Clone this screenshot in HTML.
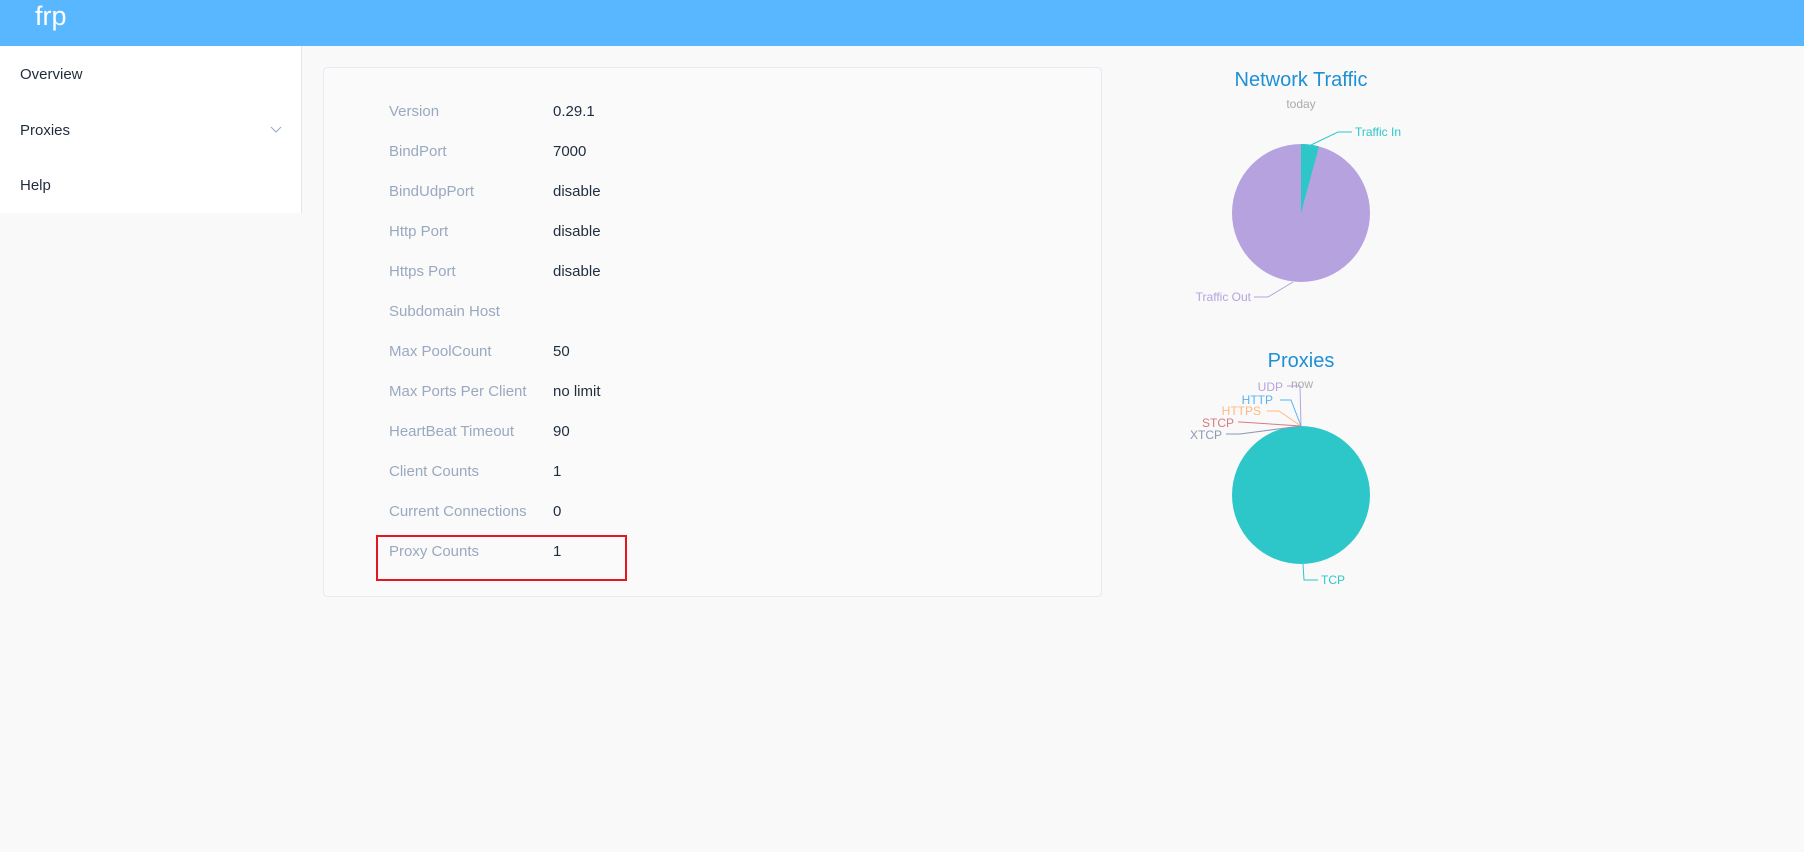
<!DOCTYPE html>
<html><head><meta charset="utf-8"><style>
body{margin:0;width:1804px;height:852px;background:#f9f9f9;font-family:"Liberation Sans",sans-serif;position:relative;overflow:hidden}
.hdr{position:absolute;left:0;top:0;width:1804px;height:46px;background:#58b7ff}
.hdr span{position:absolute;left:35px;top:1px;color:#fff;font-size:27px;line-height:30px}
.side{position:absolute;left:0;top:46px;width:301px;height:167px;background:#fff;border-right:1px solid #e6e6e6}
.side div{position:absolute;left:20px;font-size:15px;color:#1f2d3d}
.card{position:absolute;left:323px;top:67px;width:777px;height:528px;border:1px solid #e6ebf5;border-radius:4px;background:#fafafa}
.r{position:absolute;font-size:15px}
.l{left:389px;color:#99a9bf}.v{left:553px;color:#1f2d3d}
.box{position:absolute;left:376px;top:535px;width:247px;height:42px;border:2px solid #e5161f}
</style></head><body>
<div class="hdr"><span>frp</span></div>
<div class="side"><div style="top:20px">Overview</div><div style="top:76px">Proxies</div><div style="top:131px">Help</div>
<svg style="position:absolute;left:270px;top:80px" width="12" height="8"><path d="M1 1L6 6L11 1" stroke="#99a9bf" fill="none"/></svg></div>
<div class="card"></div>
<div class="r l" style="top:103px">Version</div><div class="r v" style="top:103px">0.29.1</div>
<div class="r l" style="top:143px">BindPort</div><div class="r v" style="top:143px">7000</div>
<div class="r l" style="top:183px">BindUdpPort</div><div class="r v" style="top:183px">disable</div>
<div class="r l" style="top:223px">Http Port</div><div class="r v" style="top:223px">disable</div>
<div class="r l" style="top:263px">Https Port</div><div class="r v" style="top:263px">disable</div>
<div class="r l" style="top:303px">Subdomain Host</div>
<div class="r l" style="top:343px">Max PoolCount</div><div class="r v" style="top:343px">50</div>
<div class="r l" style="top:383px">Max Ports Per Client</div><div class="r v" style="top:383px">no limit</div>
<div class="r l" style="top:423px">HeartBeat Timeout</div><div class="r v" style="top:423px">90</div>
<div class="r l" style="top:463px">Client Counts</div><div class="r v" style="top:463px">1</div>
<div class="r l" style="top:503px">Current Connections</div><div class="r v" style="top:503px">0</div>
<div class="r l" style="top:543px">Proxy Counts</div><div class="r v" style="top:543px">1</div>
<div class="box"></div>
<svg style="position:absolute;left:0;top:0" width="1804" height="852" font-family="Liberation Sans, sans-serif">
<text x="1301" y="86" text-anchor="middle" font-size="20" fill="#1e90d6">Network Traffic</text>
<text x="1301" y="108" text-anchor="middle" font-size="12" fill="#aaa">today</text>
<circle cx="1301" cy="213" r="69" fill="#b6a2de"/>
<path d="M1301 213L1301 144A69 69 0 0 1 1319 146.4Z" fill="#2ec7c9"/>
<polyline points="1311,145 1338,132 1352,132" stroke="#2ec7c9" fill="none"/>
<text x="1355" y="136" font-size="12" fill="#2ec7c9">Traffic In</text>
<polyline points="1293,282 1268,297 1254,297" stroke="#b6a2de" fill="none"/>
<text x="1251" y="301" text-anchor="end" font-size="12" fill="#b6a2de">Traffic Out</text>
<text x="1301" y="367" text-anchor="middle" font-size="20" fill="#1e90d6">Proxies</text>
<text x="1302" y="388" text-anchor="middle" font-size="12" fill="#aaa">now</text>
<circle cx="1301" cy="495" r="69" fill="#2ec7c9"/>
<polyline points="1301,426 1300,386 1287,386" stroke="#b6a2de" fill="none"/>
<text x="1283" y="391" text-anchor="end" font-size="12" fill="#b6a2de">UDP</text>
<polyline points="1301,426 1291,400 1280,400" stroke="#5ab1ef" fill="none"/>
<text x="1273" y="404" text-anchor="end" font-size="12" fill="#5ab1ef">HTTP</text>
<polyline points="1301,426 1279,411 1267,411" stroke="#ffb980" fill="none"/>
<text x="1261" y="415" text-anchor="end" font-size="12" fill="#ffb980">HTTPS</text>
<polyline points="1301,426 1240,422 1238,422" stroke="#d87a80" fill="none"/>
<text x="1234" y="427" text-anchor="end" font-size="12" fill="#d87a80">STCP</text>
<polyline points="1301,426 1240,434 1226,434" stroke="#8d98b3" fill="none"/>
<text x="1222" y="439" text-anchor="end" font-size="12" fill="#8d98b3">XTCP</text>
<polyline points="1303,564 1304,580 1318,580" stroke="#2ec7c9" fill="none"/>
<text x="1321" y="584" font-size="12" fill="#2ec7c9">TCP</text>
</svg>
</body></html>
